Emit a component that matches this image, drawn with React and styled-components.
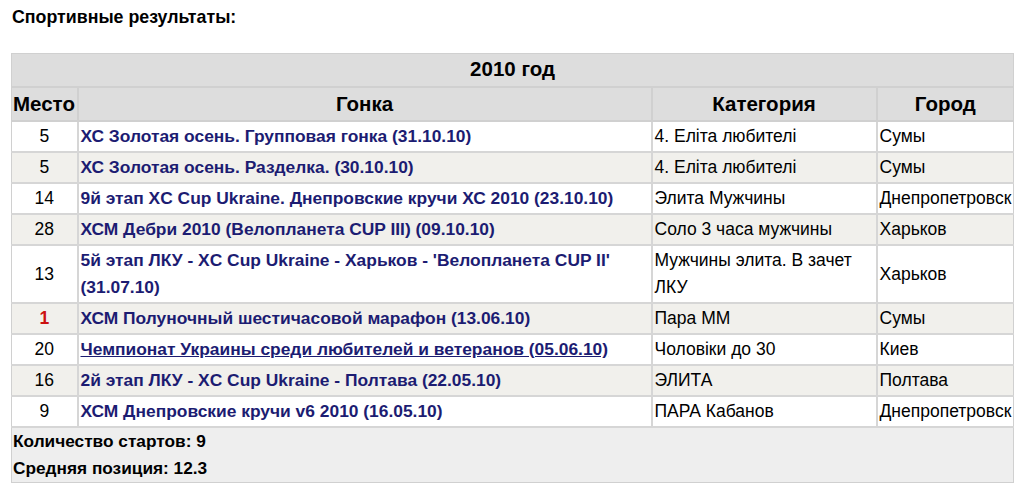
import React from "react";
import styled, { createGlobalStyle } from "styled-components";

const Global = createGlobalStyle`
  html, body { margin: 0; padding: 0; background: #fff; }
  body { font-family: "Liberation Sans", Arial, sans-serif; color: #000; }
`;

const Page = styled.div`
  padding: 6px 11px 10px 11px;
  width: 1002px;
`;

const Heading = styled.div`
  font-weight: bold;
  font-size: 17.8px;
  line-height: 22px;
  padding-left: 1px;
  margin-bottom: 25px;
`;

const Table = styled.table`
  width: 1002px;
  table-layout: fixed;
  border-collapse: collapse;
  border: 1px solid #d0d0d0;
  font-size: 17.5px;
`;

const TitleCell = styled.th`
  background: #dddddd;
  height: 30px;
  padding: 0 0 2px 0;
  font-size: 20.5px;
  font-weight: bold;
  text-align: center;
  border-bottom: 2px solid #d0d0d0;
`;

const HeadCell = styled.th`
  background: #dddddd;
  height: 32px;
  padding: 0 1px;
  font-size: 20.5px;
  font-weight: bold;
  text-align: center;
  border: 2px solid #d0d0d0;
  border-top: none;
  white-space: nowrap;
  overflow: visible;
  &:first-child { border-left: none; text-align: left; }
  &:last-child { border-right: none; }
`;

const Row = styled.tr`
  background: ${(p) => (p.$alt ? "#f1f0ec" : "#ffffff")};
`;

const Cell = styled.td`
  padding: 1px 2px;
  line-height: 27px;
  text-align: ${(p) => (p.$center ? "center" : "left")};
  vertical-align: middle;
  border: 2px solid #d6d6d6;
  border-top: none;
  white-space: ${(p) => (p.$nowrap ? "nowrap" : "normal")};
  overflow: visible;
  &:first-child { border-left: none; }
  &:last-child { border-right: none; }
`;

const Place = styled.span`
  color: ${(p) => (p.$first ? "#cc1111" : "#000")};
  font-weight: ${(p) => (p.$first ? "bold" : "normal")};
`;

const RaceLink = styled.a`
  color: #1c1c72;
  font-weight: bold;
  font-size: 17.4px;
  text-decoration: ${(p) => (p.$underline ? "underline" : "none")};
`;

const FooterCell = styled.td`
  background: #eeeeee;
  padding: 0 1px;
  line-height: 27px;
  font-size: 17.25px;
  font-weight: bold;
`;

const rows = [
  ["5", "ХС Золотая осень. Групповая гонка (31.10.10)", "4. Еліта любителі", "Сумы"],
  ["5", "ХС Золотая осень. Разделка. (30.10.10)", "4. Еліта любителі", "Сумы"],
  ["14", "9й этап XC Cup Ukraine. Днепровские кручи ХС 2010 (23.10.10)", "Элита Мужчины", "Днепропетровск"],
  ["28", "ХСМ Дебри 2010 (Велопланета CUP III) (09.10.10)", "Соло 3 часа мужчины", "Харьков"],
  ["13", "5й этап ЛКУ - XC Cup Ukraine - Харьков - 'Велопланета CUP II' (31.07.10)", "Мужчины элита. В зачет ЛКУ", "Харьков"],
  ["1", "ХСМ Полуночный шестичасовой марафон (13.06.10)", "Пара ММ", "Сумы"],
  ["20", "Чемпионат Украины среди любителей и ветеранов (05.06.10)", "Чоловіки до 30", "Киев", true],
  ["16", "2й этап ЛКУ - XC Cup Ukraine - Полтава (22.05.10)", "ЭЛИТА", "Полтава"],
  ["9", "ХСМ Днепровские кручи v6 2010 (16.05.10)", "ПАРА Кабанов", "Днепропетровск"],
];

export default function App() {
  return (
    <>
      <Global />
      <Page>
        <Heading>Спортивные результаты:</Heading>
        <Table>
          <colgroup>
            <col style={{ width: 66 }} />
            <col style={{ width: 574 }} />
            <col style={{ width: 225 }} />
            <col style={{ width: 137 }} />
          </colgroup>
          <thead>
            <tr>
              <TitleCell colSpan={4}>2010 год</TitleCell>
            </tr>
            <tr>
              <HeadCell>Место</HeadCell>
              <HeadCell>Гонка</HeadCell>
              <HeadCell>Категория</HeadCell>
              <HeadCell>Город</HeadCell>
            </tr>
          </thead>
          <tbody>
            {rows.map((r, i) => (
              <Row key={i} $alt={i % 2 === 1}>
                <Cell $center>
                  <Place $first={r[0] === "1"}>{r[0]}</Place>
                </Cell>
                <Cell>
                  <RaceLink href="#" $underline={!!r[4]}>{r[1]}</RaceLink>
                </Cell>
                <Cell>{r[2]}</Cell>
                <Cell $nowrap>{r[3]}</Cell>
              </Row>
            ))}
            <tr>
              <FooterCell colSpan={4}>
                Количество стартов: 9
                <br />
                Средняя позиция: 12.3
              </FooterCell>
            </tr>
          </tbody>
        </Table>
      </Page>
    </>
  );
}
